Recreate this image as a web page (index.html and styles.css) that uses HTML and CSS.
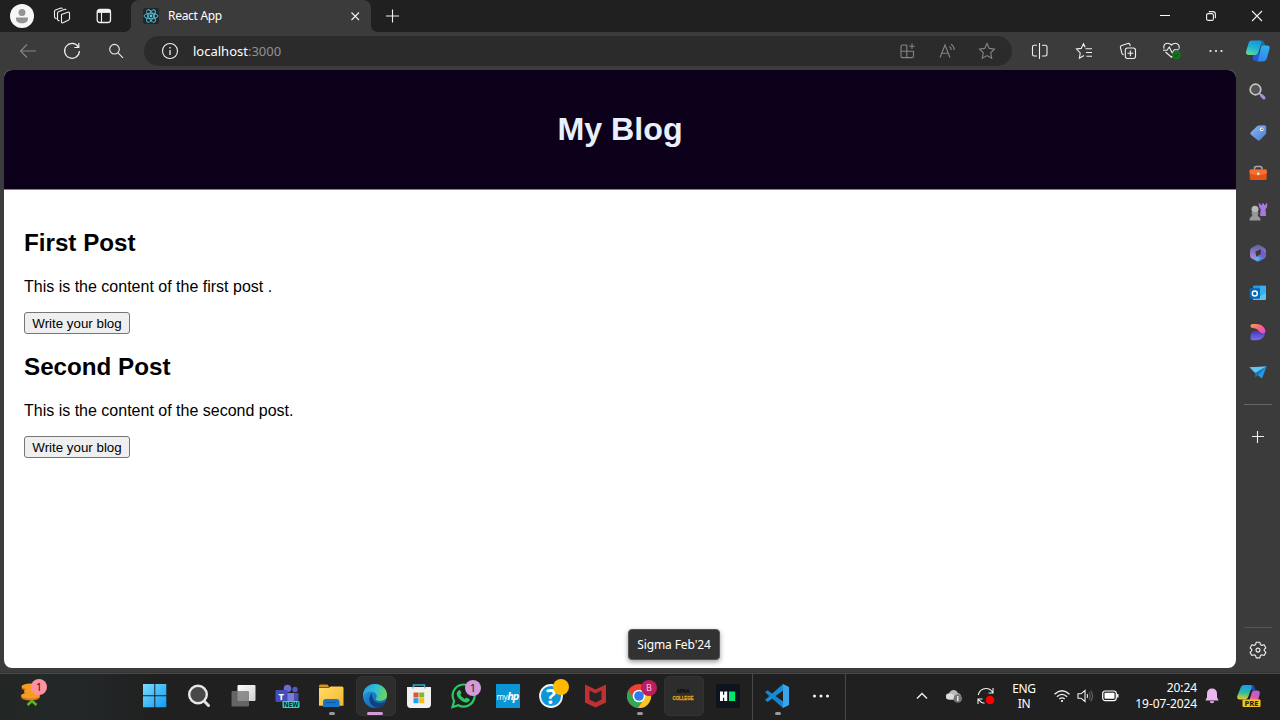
FILE: index.html
```html
<!DOCTYPE html>
<html lang="en">
<head>
<meta charset="utf-8">
<title>React App</title>
<link rel="stylesheet" href="styles.css">
</head>
<body>
<svg width="0" height="0" class="defs" aria-hidden="true">
  <defs>
    <linearGradient id="cpA" x1="0.7" y1="0" x2="0.3" y2="1"><stop offset="0" stop-color="#1594e0"/><stop offset=".5" stop-color="#20b3d4"/><stop offset="1" stop-color="#5fd894"/></linearGradient>
    <linearGradient id="cpB" x1="0.5" y1="0" x2="0.3" y2="1"><stop offset="0" stop-color="#2fb0f0"/><stop offset="1" stop-color="#2f83ee"/></linearGradient>
    <linearGradient id="cpC" x1="0.4" y1="0" x2="0.3" y2="1"><stop offset="0" stop-color="#169df0"/><stop offset=".5" stop-color="#2fb99f"/><stop offset="1" stop-color="#e8cc2b"/></linearGradient>
    <linearGradient id="cpD" x1="0.7" y1="0" x2="0.2" y2="1"><stop offset="0" stop-color="#a463e8"/><stop offset=".6" stop-color="#de59a8"/><stop offset="1" stop-color="#f58060"/></linearGradient>
    <linearGradient id="win" x1="0" y1="0" x2="1" y2="1"><stop offset="0" stop-color="#7adcff"/><stop offset="1" stop-color="#109bf2"/></linearGradient>
    <linearGradient id="edgeTop" x1="0" y1=".3" x2="1" y2=".5"><stop offset="0" stop-color="#299fe4"/><stop offset=".5" stop-color="#30bdd5"/><stop offset="1" stop-color="#70d753"/></linearGradient>
    <linearGradient id="edgeLow" x1="0" y1="0" x2="1" y2="1"><stop offset="0" stop-color="#2299e4"/><stop offset="1" stop-color="#105aa8"/></linearGradient>
    <linearGradient id="m365" x1="0" y1="0" x2="0" y2="1"><stop offset="0" stop-color="#59609e"/><stop offset="1" stop-color="#bd8be6"/></linearGradient>
    <linearGradient id="desTop" x1="0" y1="0" x2="1" y2="1"><stop offset="0" stop-color="#ffa13c"/><stop offset=".5" stop-color="#f8618d"/><stop offset="1" stop-color="#d34be3"/></linearGradient>
    <linearGradient id="desLow" x1="0" y1="0" x2="0" y2="1"><stop offset="0" stop-color="#4638b0"/><stop offset="1" stop-color="#7370f0"/></linearGradient>
    <linearGradient id="folder" x1="0" y1="0" x2="1" y2="1"><stop offset="0" stop-color="#ffdd67"/><stop offset="1" stop-color="#f5b62f"/></linearGradient>
    <linearGradient id="tag" x1="0" y1="0" x2="1" y2="1"><stop offset="0" stop-color="#8cbcf3"/><stop offset="1" stop-color="#4779cf"/></linearGradient>
    <linearGradient id="view" x1="0" y1="0" x2="1" y2="1"><stop offset="0" stop-color="#fff"/><stop offset="1" stop-color="#cfcfcf"/></linearGradient>
  </defs>
</svg>
<div class="desktop">
  <div class="titlebar">
    <div class="cell w40"><svg width="24" height="24"><circle cx="12" cy="12" r="12" fill="#f7f7f7"/><circle cx="12" cy="8.400" r="3.500" fill="#949494"/><path d="M6 13.500h12v1.200c0 3-2.500 4.500-6 4.500s-6-1.500-6-4.500z" fill="#949494"/></svg></div>
    <div class="cell w40"><svg class="line" width="18" height="18"><path d="M8.500 7.600l6.200-2.400q1.800-.5 1.800 1.200v5.200q0 1.200-1.200 1.700l-5.300 2.500q-1.500.5-1.500-1zM6.500 14l-1.200-.6q-.8-.4-.8-1.400V6.200q0-1 1-1.400l6.300-2.500q1-.2 1.400.7M3.600 11.800l-1.200-.5q-.9-.5-.9-1.500V4.500q0-1 1-1.400L8 1.100q1-.2 1.500.5"/></svg></div>
    <div class="cell"><svg class="line" width="16" height="16"><rect x="1.200" y="1.500" width="13.300" height="13" rx="2.500" stroke-width="1.300"/><path d="M1.500 3.400h13" stroke-width="3"/><path d="M5.500 4v10"/></svg></div>
    <div class="tab">
      <svg width="16" height="16"><rect width="16" height="16" rx="2" fill="#20272b"/><g fill="none" stroke="#58c4dc" stroke-width=".9"><ellipse cx="8" cy="8" rx="7" ry="2.700"/><ellipse cx="8" cy="8" rx="7" ry="2.700" transform="rotate(60 8 8)"/><ellipse cx="8" cy="8" rx="7" ry="2.700" transform="rotate(120 8 8)"/></g><circle cx="8" cy="8" r="1.400" fill="#58c4dc"/></svg>
      <span class="tab-title">React App</span>
      <svg class="line" width="10" height="10"><path d="M1.500 1.500l7.500 7.500M9 1.500L1.500 9"/></svg>
    </div>
    <div class="cell"><svg class="line" width="14" height="14"><path d="M6.500 .5v13M0 7h13"/></svg></div>
    <div class="window-controls">
      <div class="cell w46"><svg width="10" height="10"><path d="M0 4.500h10" stroke="#fff"/></svg></div>
      <div class="cell w46"><svg class="line" width="10" height="10"><rect x=".6" y="2.600" width="6.800" height="6.800" rx="1.500"/><path d="M2.800.6h4.200a2.400 2.400 0 0 1 2.400 2.400v4.200"/></svg></div>
      <div class="cell w46"><svg class="line" width="12" height="12"><path d="M1 1l10 10M11 1L1 11"/></svg></div>
    </div>
  </div>

  <div class="toolbar">
    <div class="cell"><svg class="line dim" width="18" height="16"><path d="M17 8H1.500M8 1.500L1.500 8 8 14.500"/></svg></div>
    <div class="cell"><svg class="line" width="18" height="18"><path d="M15.200 4.800A7.400 7.400 0 1 0 16.400 9M15.800 1v4.500h-4.500" stroke-width="1.200"/></svg></div>
    <div class="cell"><svg class="line" width="16" height="16"><circle cx="6.500" cy="6.200" r="4.800"/><path d="M10 9.800l5 5"/></svg></div>
    <div class="address">
      <svg class="line" width="18" height="18"><circle cx="9" cy="9" r="7.500"/><path d="M9 8v5M9 5v1.500" stroke-width="1.300"/></svg>
      <span class="url">localhost<span class="port">:3000</span></span>
      <div class="address-actions">
        <div class="cell w40"><svg class="line dim" width="16" height="16"><path d="M7.800 2H3.500Q2 2 2 3.500v9.800q0 1.300 1.500 1.300h9.500q1.500 0 1.500-1.500V8.300H2M7.800 2v12.600M13 .5v5.500M10.200 3.200h5.600"/></svg></div>
        <div class="cell w40"><svg class="line dim" width="18" height="16"><path d="M2 14.500L7 2l5 12.500M3.800 10.200h6.500M11.500 3.500q1.700 1.500 1.700 3.500M13.100 1.100q3.200 2.400 3.200 6"/></svg></div>
        <div class="cell w40"><svg class="line dim" width="18" height="18"><path d="M9 1.500l2.300 4.900 5.200.7-3.800 3.700 1 5.400L9 13.600l-4.700 2.600 1-5.400L1.500 7.100l5.200-.7z"/></svg></div>
      </div>
    </div>
    <div class="cell"><svg class="line" width="18" height="18"><path d="M8.500 1v16M6 3.200H3.200Q1.500 3.200 1.500 4.700v7.600q0 1.700 1.700 1.700H6M11 3.200h3.300q1.700 0 1.700 1.500v7.600q0 1.700-1.700 1.700H11"/></svg></div>
    <div class="cell"><svg class="line" width="18" height="18"><path d="M10.500 6.700H17M11 10.500h6M11.500 14.200H17M9 13.500l-4.600 2.700.8-5.200L1.500 7l4.700-.6 2.300-4.700 1.700 3.500"/></svg></div>
    <div class="cell"><svg class="line" width="18" height="18"><rect x="6.300" y="6" width="10.200" height="10.500" rx="2.200"/><path d="M11.400 8.500v5.700M8.500 11.300h5.800M4.800 12.800q-1.500-.2-1.900-1.500L1.400 5.500Q1.100 3.900 2.600 3.400l6.200-1.900q1.500-.4 2.100 1l.4 1.500"/></svg></div>
    <div class="cell"><svg width="20" height="20"><g class="line"><path d="M2 7.600C.8 2 6.500 1 9.500 4 13 .8 18.300 2.300 17 7.800M3.500 11l6 5.200 3-2.700M1 9.300h4L7.300 6l3 6 2-3.300h4.500"/></g><circle cx="14.500" cy="14" r="4.500" fill="#14701b"/><path d="M12.400 14l1.600 1.500 2.500-2.700" fill="none" stroke="#1e4122"/></svg></div>
    <div class="cell"><svg width="16" height="4" fill="#eee"><circle cx="2.500" cy="2" r="1.100"/><circle cx="8" cy="2" r="1.100"/><circle cx="13.500" cy="2" r="1.100"/></svg></div>
    <div class="cell w40"><svg width="26" height="24"><path d="M9 14l7 1-2.500 5q-1.300 2.500-3.500 2-2-.5-2.500-3z" fill="#2558d8"/><path d="M13 1.500h3.500q2.300 0 3 2.500l1 3h-6z" fill="#176f9d"/><path d="M7 1.500h7.500q2.500 0 1.800 2.800L13.500 13q-.8 3-4 3H4Q.2 16 1.200 12L3.500 4.500q.7-3 3.500-3z" fill="url(#cpA)"/><path d="M17.500 6.500H22q3.300 0 2.500 3.400l-2.500 8.800q-1 4-4.500 3.800h-6.500q2-.5 2.500-3l2-9.500q.4-3.200 2-3.500z" fill="url(#cpB)"/></svg></div>
  </div>

  <div class="workspace">
    <div class="page">
      <header class="blog-header"><h1>My Blog</h1></header>
      <main class="blog-main">
        <article><h2>First Post</h2><p>This is the content of the first post .</p><button>Write your blog</button></article>
        <article><h2>Second Post</h2><p>This is the content of the second post.</p><button>Write your blog</button></article>
      </main>
    </div>
    <aside class="sidebar">
      <div class="side"><svg width="18" height="18"><path d="M10.500 10.500l2 2" stroke="#bbb" stroke-width="1.500"/><path d="M12.700 12.700l2.200 2.200" stroke="#b18be0" stroke-width="3.200" stroke-linecap="round"/><circle cx="6.500" cy="6.500" r="5.300" fill="#555" stroke="#c4c4c4" stroke-width="1.700"/></svg></div>
      <div class="side low"><svg width="18" height="18"><path d="M10 1.500l5.500-.3q1.800 0 1.700 1.700v5.800q0 1-.8 1.900l-5.300 5.500q-1.400 1.400-2.700 0L2 10.700q-1.400-1.400 0-2.700L7.800 2.500q1-.9 2.200-1z" fill="url(#tag)"/><circle cx="12.700" cy="5.400" r="1.800" fill="#fff"/><circle cx="13" cy="5.200" r=".8" fill="#335"/></svg></div>
      <div class="side low"><svg width="18" height="18"><path d="M5.500 6V4.200q0-1.700 1.700-1.700h4q1.700 0 1.700 1.700V6" fill="none" stroke="#aaa" stroke-width="1.600"/><rect x=".7" y="5.300" width="17" height="10.700" rx="1.500" fill="#df5418"/><path d="M.7 5.800h17v3.600q-8.500 3-17 0z" fill="#f77030"/><rect x="8" y="8.500" width="2.500" height="2.800" rx=".7" fill="#ddd"/></svg></div>
      <div class="side"><svg width="20" height="20"><path d="M10.500 1.500h2V3H14V1.500h2V3h1.500V1.500h2l-.8 4.500-1.200 1 .6 7h-6l.6-7-1.200-1z" fill="#a679e0"/><circle cx="7" cy="7.300" r="3.500" fill="#b7b7b7"/><path d="M3.500 10.300h7v1.800l-1 .5q0 2 2.500 3.200.5 1 .5 2.700h-11q0-1.700.5-2.700 2.500-1.200 2.500-3.200l-1-.5z" fill="#999"/></svg></div>
      <div class="side low"><svg width="18" height="18"><path d="M10.500 1l4.800 2.800q1.700 1 1.700 3v2.400L11.500 5.500 7 7.800v5L4 15.300l-1.300-.8Q1 13.500 1 11.500V6.800q0-2 1.700-3L7.500 1Q9 .2 10.500 1z" fill="url(#m365)"/><path d="M17 7.500v4q0 2-1.700 3L10.500 17.200q-1.500.8-3 0l-4-2.400L7 12.500l4.500-2.300z" fill="#527ddd"/><path d="M11.500 5.500L17 8.700v2.800q0 1.500-1.300 2.300L11.500 12z" fill="#785bc8"/><path d="M3.500 14.800l3.500-2.300 5 1.300-3.500 3.500z" fill="#63aee7"/><path d="M6.500 7.500l5-2.300v5L7 12.500z" fill="#3b3b3b"/></svg></div>
      <div class="side low"><svg width="18" height="18"><rect x="4" y="1.500" width="13" height="14.500" rx="1" fill="#249adf"/><path d="M4 8l7 4 6-4v6.500q0 1.500-1.500 1.500H4z" fill="#57c4f1"/><path d="M11 2h6v7l-6 3z" fill="#37b0ef"/><rect x=".5" y="4.300" width="10.500" height="10.500" rx="1.200" fill="#0865b7"/><circle cx="5.800" cy="9.500" r="2.500" fill="none" stroke="#fff" stroke-width="1.400"/></svg></div>
      <div class="side"><svg width="18" height="18"><path d="M3.500 1H7.500q7 0 8.800 6.500.6 3-2.300 3.300-2.300-.2-4.300-2.800Q7.500 5 3.500 5 1.500 5 1.500 3t2-2z" fill="url(#desTop)"/><path d="M3.500 17.200q-2 0-2-2v-1.500Q1.500 7.700 7 7.700q2 0 3.600 1.500 1.700 1.500 3.400 1.600 1.700 0 2.200-.8Q15 17.200 7.500 17.200z" fill="url(#desLow)"/></svg></div>
      <div class="side"><svg width="18" height="18"><path d="M.5 4.300L17.500 3.500 13 15.500l-4.700-3.700z" fill="#2998e2"/><path d="M.5 4.300l17-.8L6.200 10z" fill="#5fc7f2"/><path d="M17.500 3.500L6.200 10v4.500l3-2.500z" fill="#1777ba"/></svg></div>
      <div class="rule upper"></div>
      <svg class="line" width="12" height="12"><path d="M5.500 0v12M0 5.500h12"/></svg>
      <div class="rule lower"></div>
      <svg class="line" width="18" height="18"><path d="M7.200 1.200h3.600l.6 2.400 1.400.8 2.300-.7 1.800 3.200L15.200 8.500v1.200l1.700 1.700-1.800 3.100-2.300-.7-1.400.8-.6 2.300H7.200l-.6-2.300-1.400-.8-2.300.7-1.800-3.100 1.700-1.700V8.500L1.100 6.900l1.800-3.200 2.300.7 1.400-.8z" stroke-linejoin="round"/><circle cx="9" cy="9.100" r="2"/></svg>
    </aside>
  </div>

  <div class="taskbar">
    <div class="widget"><svg width="28" height="30"><g fill="#f59c22"><ellipse cx="10.500" cy="10" rx="9" ry="3" fill="#c96d15"/><ellipse cx="10.500" cy="8.500" rx="9" ry="3"/><ellipse cx="12" cy="14.200" rx="8" ry="3" fill="#c96d15"/><ellipse cx="12" cy="13" rx="8" ry="3"/><ellipse cx="10.500" cy="19" rx="9.500" ry="3.500" fill="#df791a"/><ellipse cx="10.500" cy="17.500" rx="9.500" ry="3"/></g><path d="M7.500 27l4.500-4 4.500 4" fill="none" stroke="#62b51c" stroke-width="2.500"/></svg><span class="badge pink">1</span></div>
    <div class="apps">
      <div class="cell app start"><svg width="24" height="24" fill="url(#win)"><path d="M0 0h11.300v11.300H0zM12.300 0h11v11.300h-11zM0 12.300h11.300v11H0zM12.300 12.300h11v11h-11z"/></svg></div>
      <div class="cell app"><svg width="24" height="24"><circle cx="11" cy="10.500" r="8.800" fill="#484848" stroke="#e7e8ea" stroke-width="2.400"/><path d="M17.500 17.500l4 4" stroke="#e3e4e6" stroke-width="3" stroke-linecap="round"/></svg></div>
      <div class="cell app"><svg width="26" height="24"><rect x="7.500" y="1" width="18" height="16" rx="1" fill="url(#view)"/><rect x="1.500" y="7" width="17.500" height="15.500" rx="1" fill="#777" opacity=".8"/></svg></div>
      <div class="cell app"><svg width="26" height="26"><circle cx="13.500" cy="5.500" r="3.800" fill="#666ed0"/><circle cx="21" cy="6.500" r="2.700" fill="#555bbb"/><path d="M17 10h7.500v6q0 4-4 4H17z" fill="#484fac"/><path d="M9 10h11v9q0 4-5.500 4T9 19z" fill="#777fda"/><rect x="1.500" y="7" width="12" height="12" rx="1" fill="#464cba"/><text x="4.500" y="16.500" class="t-logo">T</text><rect x="8.500" y="18" width="17" height="7" rx="1" fill="#32d5ca"/><text x="9.500" y="24" class="t-new" textLength="15" lengthAdjust="spacingAndGlyphs">NEW</text></svg></div>
      <div class="cell app"><svg width="26" height="26"><path d="M1 3q0-1.500 1.500-1.500h7L11.500 4.500H1z" fill="#d6941a"/><path d="M1 5h9.800L12.500 3.500H24q1.500 0 1.500 1.500v17.700H1z" fill="url(#folder)"/><path d="M5 24v-5q0-3 3-3h10.500q3 0 3 3v5z" fill="#1975ca"/><path d="M8 19.500h10" stroke="#0c559d"/></svg><i class="dot"></i></div>
      <div class="cell app"><div class="tile"></div><svg class="front" width="26" height="26"><circle cx="13" cy="13" r="12" fill="url(#edgeLow)"/><path d="M1 12C1.500 5 7 .8 13.200 1 20 1.100 25 6.300 25 12.300c0 4-3.400 5.700-6.900 5.700-2.800 0-4.800-1-4-2.500 2-3.700-.8-6.700-4.800-6.700-4 0-7.200 2-8.300 5.200z" fill="url(#edgeTop)"/><path d="M10 10.500c-5 4-3 12.500 5 14.300 4-.8 7-2.800 8.700-6.300-6 4-14 1-13.700-8z" fill="#123f7e"/></svg><i class="dot active"></i></div>
      <div class="cell app"><svg width="26" height="26"><path d="M7.500 5.500V2h11v3.500" fill="none" stroke="#33a9d7" stroke-width="1.500"/><path d="M1 4h24v17q0 4-3.500 4h-17Q1 25 1 21z" fill="#f1f1f1"/><path d="M7 5.500V3.500M19 5.500V3.500" stroke="#33a9d7"/><path d="M7.500 9.500h5v5h-5z" fill="#e45529"/><path d="M13.200 9.500h5v5h-5z" fill="#80ba26"/><path d="M7.500 15.200h5v5h-5z" fill="#25a2e7"/><path d="M13.200 15.200h5v5h-5z" fill="#fdb913"/></svg></div>
      <div class="cell app"><svg width="26" height="26"><path d="M2.500 24l1.600-6A11 11 0 1 1 8.400 22.200z" fill="none" stroke="#2bc765" stroke-width="2.200"/><path d="M8.500 7.500q1.200-1 2 .3l1 2.500-1.200 1.500q1.500 3 4.500 4.300l1.500-1.600 3 1.500q1 .7 0 2-2.500 3-7 .2-5-3-5.700-7.200-.1-2 1.900-3.500z" fill="#2bc765"/></svg><span class="badge lilac">1</span></div>
      <div class="cell app"><div class="myhp">my<b>hp</b></div></div>
      <div class="cell app"><svg width="26" height="26"><circle cx="13" cy="13" r="11" fill="#0e96d5" stroke="#f5f5f5" stroke-width="1.800"/><text x="8" y="21" class="t-help">?</text></svg><span class="badge yellow"></span></div>
      <div class="cell app"><svg width="24" height="26"><path d="M2 1.500l10.500 5 10.500-5v18l-10.500 5L2 19.500z" fill="#be3033"/><path d="M6.500 7.500l6 3 6-3v9l-6 3-6-3z" fill="#252525"/></svg></div>
      <div class="cell app"><svg width="26" height="26"><circle cx="13" cy="13" r="12" fill="#e94132"/><path d="M2.600 7A12 12 0 0 0 12 25l5.200-9.500L13 19 8 16z" fill="#32a853"/><path d="M13 7h10.500A12 12 0 0 1 12 25l6-9z" fill="#fcc526"/><circle cx="13" cy="13" r="6.300" fill="#fff"/><circle cx="13" cy="13" r="4.800" fill="#2d7bee"/></svg><span class="badge magenta">B</span><i class="dot"></i></div>
      <div class="cell app"><div class="tile"></div><svg class="front" width="32" height="24"><text x="9.500" y="8.500" class="t-apna" textLength="13" lengthAdjust="spacingAndGlyphs">APNA</text><text x="5.500" y="15.500" class="t-college" textLength="21" lengthAdjust="spacingAndGlyphs">COLLEGE</text></svg></div>
      <div class="cell app"><svg width="25" height="24"><rect x="1" width="24" height="24" rx="1" fill="#0d141e"/><path d="M5 7.500h3v3.300h1.200V7.500h3v9.500h-3v-3.300H8V17H5z" fill="#fff"/><rect x="14" y="7.500" width="6.200" height="9.500" fill="#00e96b"/></svg></div>
    </div>
    <div class="pinned">
      <div class="cell app"><svg width="26" height="26"><path d="M1 9.200l2.500-2L19 18.500V25z" fill="#1684ce"/><path d="M1 17l2.500 2L19 7.500V1z" fill="#168bd6"/><path d="M19 1l6 3v18l-6 3z" fill="#37a6ed"/></svg><i class="dot"></i></div>
      <div class="cell app"><svg width="18" height="4" fill="#f5f5f5"><circle cx="2.500" cy="2" r="1.500"/><circle cx="9" cy="2" r="1.500"/><circle cx="15.500" cy="2" r="1.500"/></svg></div>
    </div>
    <div class="tray">
      <div class="cell w32"><svg class="line" width="12" height="8"><path d="M1 6.500l5-5 5 5" stroke-width="1.400"/></svg></div>
      <div class="cell w32"><svg width="18" height="16"><path d="M4 11.500q-3-.2-3-3t3-3Q5.500 1.500 9.300 2q2.700.3 3.700 3.200 3 .4 3 3.300t-3 3z" fill="#b9b9b9"/><path d="M4 5.500q4-1 9 6H4q-3-.2-3-3t3-3z" fill="#ddd"/><circle cx="12.800" cy="10.500" r="4.300" fill="#777"/><path d="M12.800 8v5" stroke="#fff" stroke-width="1.200"/></svg></div>
      <div class="cell w32"><svg width="20" height="18"><g class="line"><path d="M2.200 8Q4 1.500 10 1.500q4.500 0 6.800 4M17 1v5h-4.500M8.500 16.300Q5 16 2.500 12.700M2 17v-5h4.500"/></g><circle cx="14" cy="13" r="4.300" fill="#f00"/></svg></div>
      <div class="language"><span>ENG</span><span>IN</span></div>
      <svg class="line wifi" width="18" height="14"><path d="M1.500 5.300q7.500-7 15 0M3.900 7.700q5.100-4.700 10.200 0M6.300 10.100q2.700-2.400 5.400 0" stroke-width="1.300"/><circle cx="9" cy="12" r="1.100" fill="#fff" stroke="none"/></svg>
      <svg class="line volume" width="17" height="14"><path d="M1 4.800h3L8 1.500v11L4 9.200H1zM10 5q1.300 2 0 4"/><path d="M12 3.300q2.300 3.700 0 7.400M13.700 1.800q3.800 5.200 0 10.400" stroke="#666"/></svg>
      <svg class="battery" width="17" height="12"><rect x=".7" y="1" width="13.600" height="9.600" rx="2.500" fill="none" stroke="#fff" stroke-width="1.200"/><rect x="2.500" y="2.800" width="10" height="6" rx=".8" fill="#fff"/><path d="M15.800 4v3.600" stroke="#fff" stroke-width="1.400"/></svg>
      <div class="clock"><span>20:24</span><span>19-07-2024</span></div>
      <svg class="bell" width="16" height="18"><path d="M3 7q0-5.500 5-5.500T13 7v3.200l1.600 3.300H1.400L3 10.200z" fill="#e9b6ef"/><path d="M5.700 14.200h4.600q-.4 2-2.300 2t-2.300-2z" fill="#e9b6ef"/></svg>
      <svg class="copilot" width="26" height="26"><path d="M13 2h3q2 0 2.700 2l.8 3h-5z" fill="#144db2"/><path d="M8 2h6q2.500 0 1.700 2.500L12.500 13q-1 3.500-4 3.500H4Q.5 16.500 1.300 13l3.200-8q1-3 3.500-3z" fill="url(#cpC)"/><path d="M17.500 7.500H21q3.500 0 2.700 3.500l-1.500 6-9 1 2.500-8q.5-2.500 1.800-2.500z" fill="url(#cpD)"/><rect x="6.500" y="16.500" width="18" height="7.500" rx="1" fill="#f7c325"/><text x="8.500" y="23" class="t-pre" textLength="14" lengthAdjust="spacingAndGlyphs">PRE</text></svg>
    </div>
  </div>
  <div class="tooltip">Sigma Feb'24</div>
</div>
</body>
</html>
```

FILE: styles.css
```css
* { box-sizing: border-box; }
body { margin: 0; background: #3b3b3b; font-family: "Noto Sans", "Open Sans", sans-serif; color: #fff; }
svg { display: block; flex: none; }
.defs { position: absolute; }
.desktop { position: relative; width: 1280px; height: 720px; display: flex; flex-direction: column; overflow: hidden; }
.line { fill: none; stroke: #f0f0f0; stroke-width: 1.1; }
.line.dim { stroke: #858585; }
.cell { width: 44px; flex: none; display: flex; align-items: center; justify-content: center; }
.w32 { width: 32px; }
.w40 { width: 40px; }
.w46 { width: 46px; }

.titlebar { height: 32px; flex: none; display: flex; padding-left: 2px; background: #202020; }
.tab { position: relative; width: 240px; margin-left: 5px; padding: 0 11px 0 12px; display: flex; align-items: center; background: #3b3b3b; border-radius: 8px 8px 0 0; }
.tab::before, .tab::after { content: ""; position: absolute; bottom: 0; width: 6px; height: 6px; }
.tab::before { left: -6px; background: radial-gradient(circle at 0 0, transparent 5.5px, #3b3b3b 6px); }
.tab::after { right: -6px; background: radial-gradient(circle at 100% 0, transparent 5.5px, #3b3b3b 6px); }
.tab-title { flex: 1; margin: -1px 0 0 9px; font-size: 12px; letter-spacing: -0.3px; }
.window-controls { display: flex; margin-left: auto; }

.toolbar { height: 38px; flex: none; display: flex; padding-left: 6px; }
.address { width: 868px; height: 30px; margin: 4px 6px; padding: 0 5px 0 17px; display: flex; align-items: center; background: #2b2b2b; border-radius: 15px; }
.url { margin-left: 14px; font-size: 13px; letter-spacing: 0; }
.port { color: #929292; }
.address-actions { display: flex; margin-left: auto; }

.workspace { height: 602px; flex: none; display: flex; padding-left: 4px; }
.page { width: 1232px; height: 598px; overflow: hidden; background: #fff; border-radius: 8px; color: #000; font-family: "Liberation Sans", Arial, sans-serif; font-size: 16px; }
.blog-header { height: 119px; padding: 20px; overflow: hidden; background: #0d001a; color: #e8f0fb; text-align: center; box-shadow: 0 1px #85808b; }
.blog-header h1 { font-size: 32.2px; line-height: 37px; margin: 21px 0; }
.blog-main { padding: 20px; }
.blog-main h2 { font-size: 24.2px; line-height: 27px; margin: 20px 0 22px; }
.blog-main article + article h2 { margin-top: 19px; }
.blog-main p { line-height: 18px; margin: 0 0 16px; }
.blog-main button { display: block; width: 106px; height: 22px; padding: 0; border: 1px solid #767676; border-radius: 3px; background: #efefef; color: #000; font: 13.333px/19px "Liberation Sans", Arial, sans-serif; }
.sidebar { width: 44px; display: flex; flex-direction: column; align-items: center; padding-top: 2px; }
.side { height: 40px; display: flex; align-items: center; }
.side.low { padding-top: 1px; }
.rule { width: 28px; height: 1px; flex: none; background: #666; }
.rule.upper { margin: 12px 0 26px; }
.rule.lower { margin: 184px 0 13px; background: #555; }

.taskbar { height: 48px; display: flex; border-top: 1px solid #353535; background: linear-gradient(90deg, #222726, #222828 6%, #202020 12%); box-shadow: inset 0 1px #484848; }
.widget { position: relative; width: 133px; padding: 5px 0 0 20px; }
.apps { display: flex; padding-right: 3px; border-right: 1px solid #484848; }
.pinned { display: flex; padding: 0 2px; border-right: 1px solid #484848; }
.app { position: relative; padding-bottom: 1px; }
.start { padding-right: 1px; }
.tile { position: absolute; inset: 3px 1px 4px 3px; border: 1px solid #333; border-radius: 5px; background: #2d2d2d; }
.front { position: relative; }
.dot { position: absolute; left: 20px; bottom: 5px; width: 6px; height: 3px; border-radius: 2px; background: #999; }
.dot.active { left: 14px; width: 16px; background: #d49bdb; }
.badge { position: absolute; left: 24px; top: 7px; width: 16px; height: 16px; border-radius: 50%; display: flex; align-items: center; justify-content: center; font-size: 11px; line-height: 16px; color: #222; }
.pink { left: 31px; top: 6px; background: #ff91a0; }
.lilac { background: #d39bdd; }
.yellow { top: 6px; background: #ffb900; }
.magenta { background: #bd1c5e; color: #f5c9da; font-size: 9px; }
.myhp { width: 24px; height: 24px; margin-left: 1px; background: #0c95d5; font-size: 8px; line-height: 23px; text-align: center; letter-spacing: -0.5px; }
.myhp b { font-size: 11px; font-style: italic; letter-spacing: -1px; }
.t-apna, .t-college { font: 700 6px "Liberation Sans", Arial, sans-serif; fill: #080808; }
.t-college { fill: #e6a51c; stroke: #e6a51c; stroke-width: .3; }
.t-logo { font-size: 9.5px; font-weight: 700; fill: #fff; }
.t-new, .t-pre { font-size: 6.5px; font-weight: 800; fill: #062d2b; }
.t-help { font-size: 21px; font-weight: 700; fill: #fff; }

.tray { flex: 1; display: flex; align-items: center; padding: 0 0 1px 60px; }
.language { width: 44px; display: flex; flex-direction: column; align-items: center; font-size: 12px; line-height: 15px; letter-spacing: -0.3px; }
.wifi { margin-left: 7px; }
.volume { margin-left: 6px; }
.battery { margin-left: 8px; }
.clock { width: 70px; margin-left: 8px; display: flex; flex-direction: column; align-items: flex-end; font-size: 12px; line-height: 16px; letter-spacing: -0.1px; }
.bell { margin-left: 7px; }
.copilot { margin-left: 16px; }
.tooltip { position: absolute; left: 628px; top: 629px; width: 92px; height: 31px; border: 1px solid #555; border-radius: 4px; background: #323232; box-shadow: 0 2px 5px #0006; font-size: 12px; line-height: 29px; text-align: center; letter-spacing: -0.1px; }
```
